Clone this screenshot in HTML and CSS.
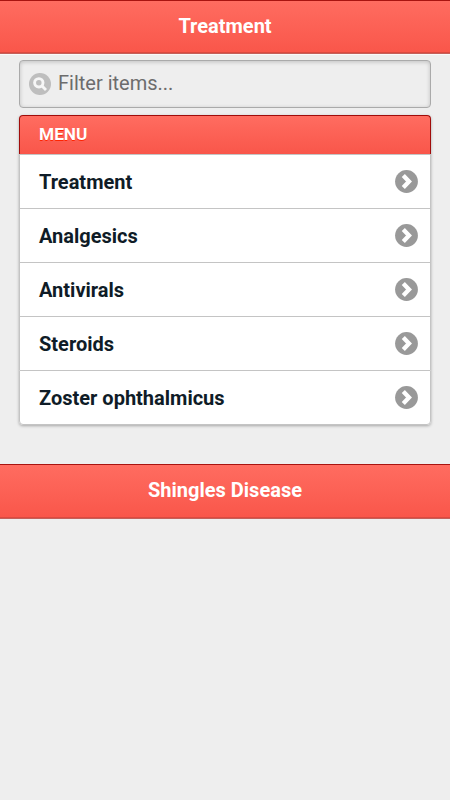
FILE: index.html
```html
<!DOCTYPE html>
<html lang="en">
<head>
    <meta charset="UTF-8">
    <meta name="viewport" content="width=device-width, initial-scale=1.0">
    <title>Treatment</title>
    <link rel="stylesheet" href="styles.css">
</head>
<body>

    <header class="bar header">
        <h1>Treatment</h1>
    </header>

    <main class="content">
        <form class="filter">
            <svg class="search-icon" viewBox="0 0 22 22">
                <circle cx="11" cy="11" r="11"/>
                <circle class="line" cx="9.8" cy="9.8" r="4.2"/>
                <path class="line" d="M12.8 12.8L17 17"/>
            </svg>
            <input type="text" placeholder="Filter items...">
        </form>

        <ul class="menu">
            <li class="divider">MENU</li>
            <li><a href="#">Treatment</a></li>
            <li><a href="#">Analgesics</a></li>
            <li><a href="#">Antivirals</a></li>
            <li><a href="#">Steroids</a></li>
            <li><a href="#">Zoster ophthalmicus</a></li>
        </ul>
    </main>

    <footer class="bar footer">
        <h1>Shingles Disease</h1>
    </footer>

    <script>
      // add the arrow to every link of the list
      const arrow = '<svg class="arrow" viewBox="0 0 23 23"><circle cx="11.5" cy="11.5" r="11.4"/><path d="M8.3 5.6L14 11.5L8.3 17.4"/></svg>';
      document.querySelectorAll('.menu a').forEach(link => link.insertAdjacentHTML('beforeend', arrow));
    </script>
</body>
</html>
```

FILE: styles.css
```css
*, *:before, *:after {
  box-sizing: border-box;
}

body {
  margin: 0;
  background: #eee;
  font-family: Roboto, sans-serif;
  font-size: 20px;
}

.bar {
  height: 54px;
  border-top: 1px solid #a81410;
  border-bottom: 1px solid #c4605a;
  background: linear-gradient(#ff6c60, #f9564a);
  box-shadow: inset 0 -1px 0 #dc4a40;
}

.header {
  box-shadow: inset 0 -1px 0 #dc4a40, 0 1px 0 #fafafa;
}

.footer {
  height: 55px;
}

.bar h1 {
  margin: 0;
  color: #fff;
  font-size: 20px;
  font-weight: 700;
  line-height: 50px;
  text-align: center;
}

.content {
  padding: 6px 19px 39px;
}

.filter {
  display: flex;
  align-items: center;
  height: 47.5px;
  padding-left: 9px;
  border: 1px solid #aaa;
  border-radius: 4px;
  background: #eee;
  box-shadow: inset 0 1px 4px rgba(0,0,0,.2);
}

.search-icon {
  width: 22px;
  height: 22px;
  fill: #bebebe;
}

.search-icon .line {
  fill: none;
  stroke: #f6f6f6;
  stroke-width: 2.9;
}

.filter input {
  flex: 1;
  min-width: 0;
  padding: 0 7px 1px;
  border: 0;
  outline: 0;
  background: transparent;
  font: 20px Roboto, sans-serif;
}

.filter input::placeholder {
  color: #6c6c6c;
}

.menu {
  margin: 7.5px 0 0;
  padding: 0;
  list-style: none;
  border-radius: 4px;
  box-shadow: 0 1px 3px rgba(0,0,0,.3);
}

.divider {
  height: 39px;
  padding-left: 19px;
  border: 1px solid #a00c0a;
  border-bottom: 0;
  border-radius: 4px 4px 0 0;
  background: linear-gradient(#ff6c60, #f9564a);
  color: #fff;
  font-size: 17.3px;
  font-weight: 700;
  line-height: 36px;
  text-shadow: 0 1px 0 #ff2400;
}

.menu a {
  display: flex;
  align-items: center;
  justify-content: space-between;
  height: 54.1px;
  padding: 0 12px 0 19px;
  border: 1px solid #c4c4c4;
  border-bottom: 0;
  background: #fff;
  color: #0f1c27;
  font-weight: 700;
  text-decoration: none;
}

.menu li:last-child a {
  height: 54.6px;
  border-bottom: 1px solid #c4c4c4;
  border-radius: 0 0 4px 4px;
}

.arrow {
  width: 23px;
  height: 23px;
  fill: #999;
}

.arrow path {
  fill: none;
  stroke: #fff;
  stroke-width: 4.3;
}
```
